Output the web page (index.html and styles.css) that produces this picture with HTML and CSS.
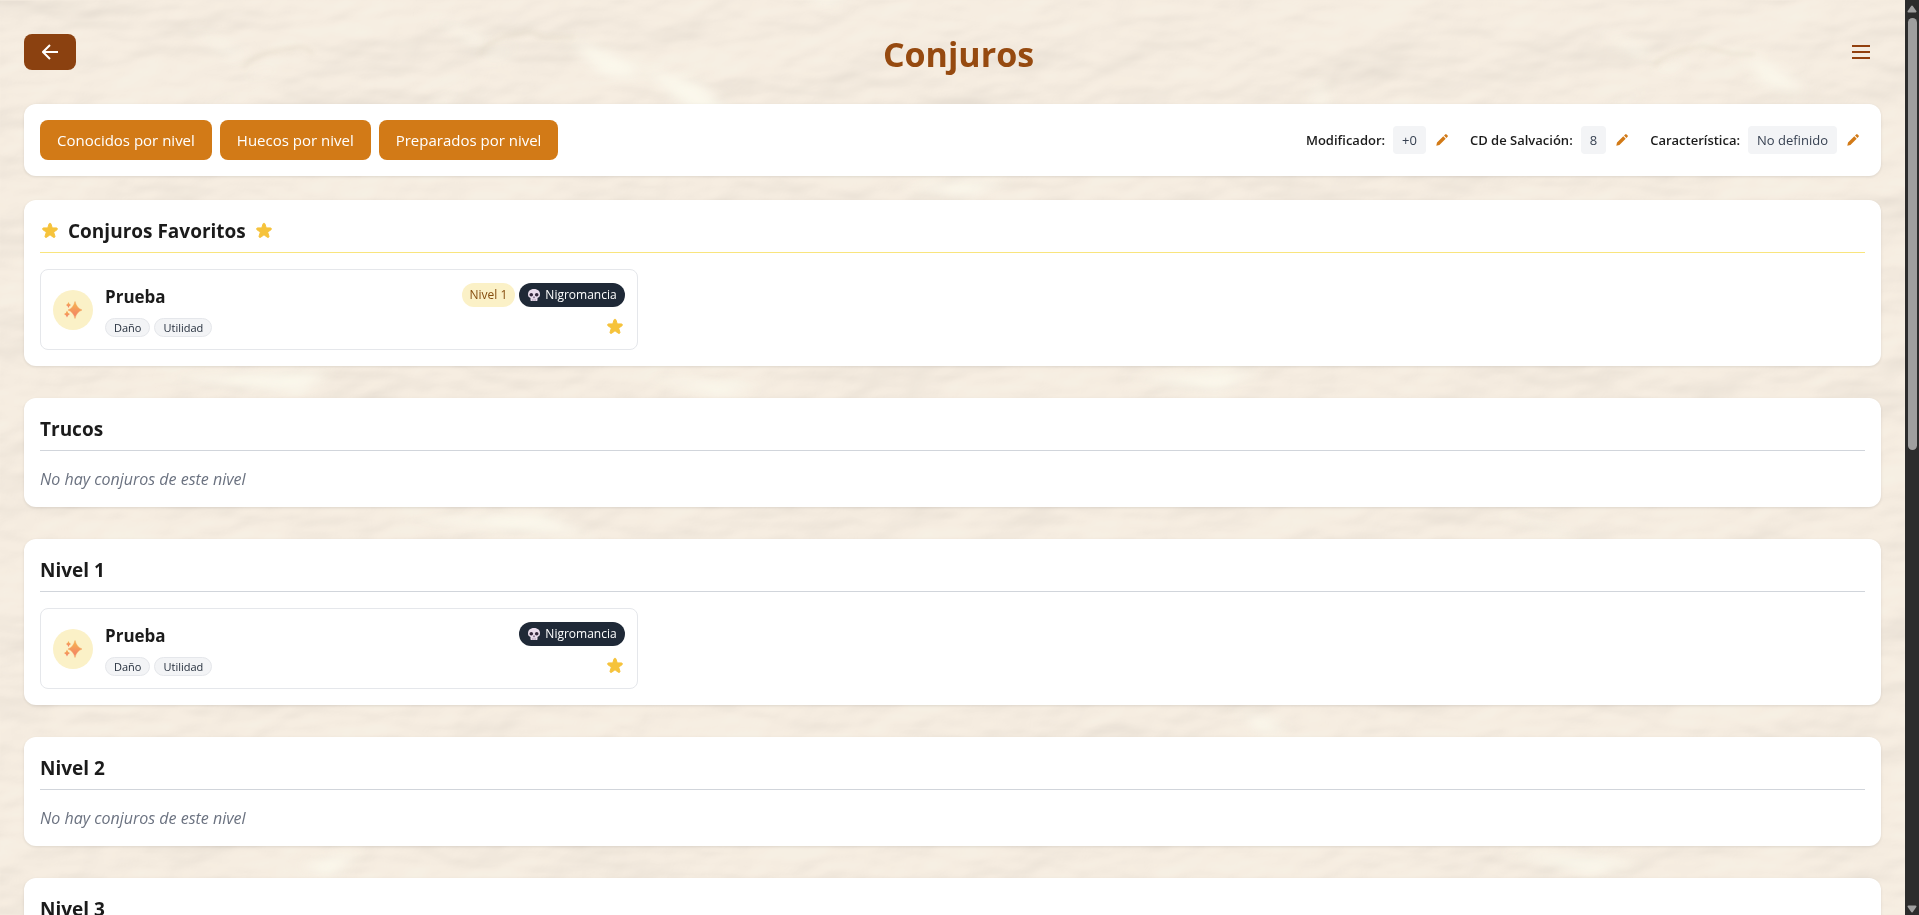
FILE: index.html
```html
<!DOCTYPE html>
<html lang="es">
<head>
<meta charset="utf-8">
<title>Conjuros</title>
<link rel="stylesheet" href="styles.css">
</head>
<body>
<svg class="paper" aria-hidden="true" viewBox="0 0 1919 915" preserveAspectRatio="xMidYMid slice">
  <filter id="crumple" x="0" y="0" width="100%" height="100%" color-interpolation-filters="sRGB">
    <feTurbulence type="fractalNoise" baseFrequency="0.006 0.012" numOctaves="4" seed="14"/>
    <feDiffuseLighting surfaceScale="7" diffuseConstant="1.1" lighting-color="#f6ede1">
      <feDistantLight azimuth="235" elevation="66"/>
    </feDiffuseLighting>
  </filter>
  <filter id="soft" x="-50%" y="-100%" width="200%" height="300%"><feGaussianBlur stdDeviation="8 6"/></filter>
  <filter id="fine" x="-20%" y="-100%" width="140%" height="300%"><feGaussianBlur stdDeviation="2"/></filter>
  <rect width="1919" height="915" fill="#f4ebdf"/>
  <rect width="1919" height="915" filter="url(#crumple)" opacity="0.25"/>
  <g fill="#fbf8ec" filter="url(#soft)">
    <path d="M190 28 243 52 238 62zM243 78 280 62 262 75zM245 82 205 120 150 160zM425 12 485 38 478 48zM480 60 515 42 500 60zM478 66 440 110 400 140z" opacity=".7"/>
    <path d="M570 38 630 62 640 80 600 74zM640 66 700 84 752 134 690 110zM800-6 850-8 830 6z"/>
    <path d="M1600 30 1650 50 1640 58zM1652 72 1690 56 1670 72zM1648 82 1600 130 1560 150zM1745 50 1795 78 1800 95 1760 84zM1320 75 1330 110 1310 104zM1330 120 1400 130 1390 155z" opacity=".85"/>
    <path d="M160 376 330 372 300 392zM640 375 760 388 720 396zM1130 378 1260 370 1220 390zM400 520 540 514 590 536zM1490 512 1560 528 1580 540zM1240 708 1290 730 1260 734zM300 866 360 850 330 878zM900 186 1010 180 970 196zM1500 850 1640 862 1590 874z"/>
  </g>
  <g fill="none" stroke="#e3d8c6" filter="url(#fine)">
    <path d="M243 68q12-16 50-20 12-4 20 6M480 54q10-18 50-22l14 6 30-1M1654 66q10-14 50-20l28 8 22 0" stroke-width="2" opacity=".7"/>
  </g>
</svg>
<svg class="sprite" aria-hidden="true">
  <symbol id="star" viewBox="0 0 20 20"><path d="M9.05 2.93c.3-.92 1.6-.92 1.9 0l1.07 3.29a1 1 0 0 0 .95.69h3.46c.97 0 1.37 1.24.59 1.81l-2.8 2.03a1 1 0 0 0-.36 1.12l1.07 3.29c.3.92-.76 1.69-1.54 1.12l-2.8-2.03a1 1 0 0 0-1.18 0l-2.8 2.03c-.78.57-1.83-.2-1.54-1.12l1.07-3.29a1 1 0 0 0-.36-1.12L2.98 8.72c-.78-.57-.38-1.81.59-1.81h3.46a1 1 0 0 0 .95-.69z" fill="#f6c33b" stroke="#f6c33b"/></symbol>
  <symbol id="pencil" viewBox="0 0 12 12"><path d="M0.3 11.7 1 8.6 7.3 2.3 9.7 4.7 3.4 11zM8 1.6 9.2.4a1 1 0 0 1 1.4 0l1 1a1 1 0 0 1 0 1.4L10.4 4z" fill="#d27a17"/></symbol>
  <symbol id="sparkles" viewBox="0 0 18 18"><linearGradient id="glow" x1="0" y1="0" x2="0" y2="1"><stop offset="0" stop-color="#f6b94d"/><stop offset="1" stop-color="#f3796b"/></linearGradient><g fill="url(#glow)"><path d="M11 .5q1.500 6.500 7 8.500-5.500 2-7 8.500-1.500-6.500-7-8.500 5.500-2 7-8.500z" stroke="#f5a45a" stroke-width=".5"/><path d="M4.500 1q.4 2 2.500 3-2.100.9-2.500 3Q4 5 2 4q2-1 2.500-3z"/><path d="M3 9.500q.5 2.500 3 3.500-2.500 1-3 3.500Q2.500 14 0 13q2.500-1 3-3.500z"/></g></symbol>
  <symbol id="skull" viewBox="0 0 14 14"><path d="M7 1c4 0 6 2.300 6 5.300 0 1.700-.6 2.900-1.700 3.300l-.8.4v2.300q0 .7-.7.7H4.200q-.7 0-.7-.7V10l-.8-.4C1.600 9.200 1 8 1 6.300 1 3.300 3 1 7 1z" fill="#e9dcec"/><circle cx="4.300" cy="6.700" r="1.800" fill="#33273b"/><circle cx="9.700" cy="6.700" r="1.800" fill="#33273b"/><path d="M7 8.300 6.200 10h1.600zM5.600 11v2M7 11v2M8.400 11v2" fill="#33273b" stroke="#9c8aa6" stroke-width=".5"/></symbol>
</svg>

<div class="window">
  <div class="page">
    <header class="header">
      <button class="back" aria-label="Volver"><svg width="16" height="16" viewBox="0 0 16 16" fill="none" stroke="#fff" stroke-width="2"><path d="M8 1 1 8l7 7M1 8h15"/></svg></button>
      <h1 class="title">Conjuros</h1>
      <button class="menu" aria-label="Menú"><svg width="18" height="14" viewBox="0 0 18 14" stroke="#92400e" stroke-width="2"><path d="M0 1h18M0 7h18M0 13h18"/></svg></button>
    </header>

    <section class="card toolbar">
      <div class="actions">
        <button class="action">Conocidos por nivel</button>
        <button class="action">Huecos por nivel</button>
        <button class="action">Preparados por nivel</button>
      </div>
      <div class="stats">
        <div class="stat"><span class="stat-name">Modificador:</span><span class="stat-value">+0</span><button class="edit" aria-label="Editar modificador"><svg width="12" height="12"><use href="#pencil"/></svg></button></div>
        <div class="stat"><span class="stat-name">CD de Salvación:</span><span class="stat-value">8</span><button class="edit" aria-label="Editar CD de salvación"><svg width="12" height="12"><use href="#pencil"/></svg></button></div>
        <div class="stat"><span class="stat-name">Característica:</span><span class="stat-value">No definido</span><button class="edit" aria-label="Editar característica"><svg width="12" height="12"><use href="#pencil"/></svg></button></div>
      </div>
    </section>

    <main class="levels">
      <section class="card">
        <h2 class="heading favorite"><svg class="star"><use href="#star"/></svg>Conjuros Favoritos<svg class="star"><use href="#star"/></svg></h2>
        <div class="grid">
          <article class="spell">
            <span class="avatar"><svg width="18" height="18"><use href="#sparkles"/></svg></span>
            <div class="info"><h3 class="name">Prueba</h3><div class="tags"><span class="tag">Daño</span><span class="tag">Utilidad</span></div></div>
            <div class="side"><div class="badges"><span class="badge level">Nivel 1</span><span class="badge school"><svg width="14" height="14"><use href="#skull"/></svg>Nigromancia</span></div><button class="fav" aria-label="Quitar de favoritos"><svg class="star"><use href="#star"/></svg></button></div>
          </article>
        </div>
      </section>
      <section class="card">
        <h2 class="heading">Trucos</h2>
        <p class="empty">No hay conjuros de este nivel</p>
      </section>
      <section class="card">
        <h2 class="heading">Nivel 1</h2>
        <div class="grid">
          <article class="spell">
            <span class="avatar"><svg width="18" height="18"><use href="#sparkles"/></svg></span>
            <div class="info"><h3 class="name">Prueba</h3><div class="tags"><span class="tag">Daño</span><span class="tag">Utilidad</span></div></div>
            <div class="side"><div class="badges"><span class="badge school"><svg width="14" height="14"><use href="#skull"/></svg>Nigromancia</span></div><button class="fav" aria-label="Quitar de favoritos"><svg class="star"><use href="#star"/></svg></button></div>
          </article>
        </div>
      </section>
      <section class="card">
        <h2 class="heading">Nivel 2</h2>
        <p class="empty">No hay conjuros de este nivel</p>
      </section>
      <section class="card">
        <h2 class="heading">Nivel 3</h2>
        <p class="empty">No hay conjuros de este nivel</p>
      </section>
    </main>
  </div>
  <div class="scrollbar" aria-hidden="true">
    <svg width="10" height="8" viewBox="0 0 10 8"><path d="M5 1.500 8.500 6.500h-7z" fill="#a0a0a0" stroke="#a0a0a0" stroke-width="2" stroke-linejoin="round"/></svg>
    <div class="track"><div class="thumb"></div></div>
    <svg width="10" height="8" viewBox="0 0 10 8"><path d="M5 6.500 8.500 1.500h-7z" fill="#a0a0a0" stroke="#a0a0a0" stroke-width="2" stroke-linejoin="round"/></svg>
  </div>
</div>
</body>
</html>
```
FILE: styles.css
```css
* { box-sizing: border-box; }
body { margin: 0; background: #f4ebdf; color: #1b1b1b; font: 15px/24px "Segoe UI", "Open Sans", "Noto Sans", sans-serif; }
h1, h2, h3, p { margin: 0; }
button { border: 0; padding: 0; background: none; font: inherit; color: inherit; cursor: pointer; }
svg { display: block; flex: none; }
.paper { position: fixed; inset: 0; width: 100%; height: 100%; z-index: -1; }
.sprite { position: absolute; width: 0; height: 0; }
.window { display: flex; height: 100vh; overflow: hidden; }
.page { flex: 1; min-width: 0; padding: 32px 24px; }
.header { display: flex; align-items: center; justify-content: space-between; height: 40px; margin-bottom: 32px; }
.back { display: grid; place-items: center; width: 52px; height: 36px; border-radius: 8px; background: #8b4110; }
.title { color: #964a10; font-size: 34px; line-height: 40px; font-weight: 700; padding-top: 4px; }
.menu { width: 40px; height: 40px; display: grid; place-items: center; }
.card { background: #fff; border-radius: 12px; padding: 16px; box-shadow: 0 1px 3px rgb(0 0 0 / 10%); }
.toolbar { display: flex; align-items: center; justify-content: space-between; margin-bottom: 24px; }
.actions { display: flex; gap: 8px; }
.action { height: 40px; padding: 0 17px; border-radius: 8px; background: #d27a17; color: #fff; }
.stats { display: flex; gap: 16px; font-size: 13px; }
.stat { display: flex; align-items: center; gap: 4px; }
.stat-name { margin-right: 4px; font-weight: 600; }
.stat-value { padding: 2px 9px; border-radius: 4px; background: #f3f4f6; color: #374151; }
.edit { padding: 6px; }
.levels { display: flex; flex-direction: column; gap: 32px; }
.heading { display: flex; align-items: center; gap: 8px; margin-bottom: 16px; padding-bottom: 6px; border-bottom: 1px solid #d1d5db; font-size: 19px; line-height: 30px; font-weight: 700; }
.favorite { border-color: #f9e57e; }
.star { width: 20px; height: 20px; }
.empty { font-size: 16px; font-style: italic; color: #6b7280; }
.grid { display: grid; grid-template-columns: repeat(3, 1fr); gap: 16px; }
.spell { display: flex; align-items: center; gap: 12px; padding: 12px; border: 1px solid #e5e7eb; border-radius: 8px; }
.avatar { display: grid; place-items: center; width: 40px; height: 40px; border-radius: 50%; background: #fbf1c7; }
.info { flex: 1; }
.name { font-size: 17px; line-height: 30px; font-weight: 700; }
.tags { display: flex; gap: 4px; margin-top: 6px; }
.tag { padding: 0 8px; border: 1px solid #e5e7eb; border-radius: 10px; background: #f3f4f6; color: #1f2937; font-size: 11px; line-height: 17px; }
.side { display: flex; flex-direction: column; align-items: flex-end; gap: 10px; padding-top: 1px; }
.badges { display: flex; gap: 4px; }
.badge { display: flex; align-items: center; gap: 4px; padding: 0 8px; border-radius: 12px; font-size: 12px; line-height: 24px; }
.level { background: #fbf1c7; color: #854d0e; }
.school { background: #1f2937; color: #fff; }
.fav { display: block; }
.scrollbar { display: flex; flex-direction: column; align-items: center; gap: 5px; width: 14px; padding: 5px 0 2px; background: #2c2c2c; }
.track { flex: 1; }
.thumb { width: 9px; height: 49%; border-radius: 5px; background: #9f9f9f; }
```
